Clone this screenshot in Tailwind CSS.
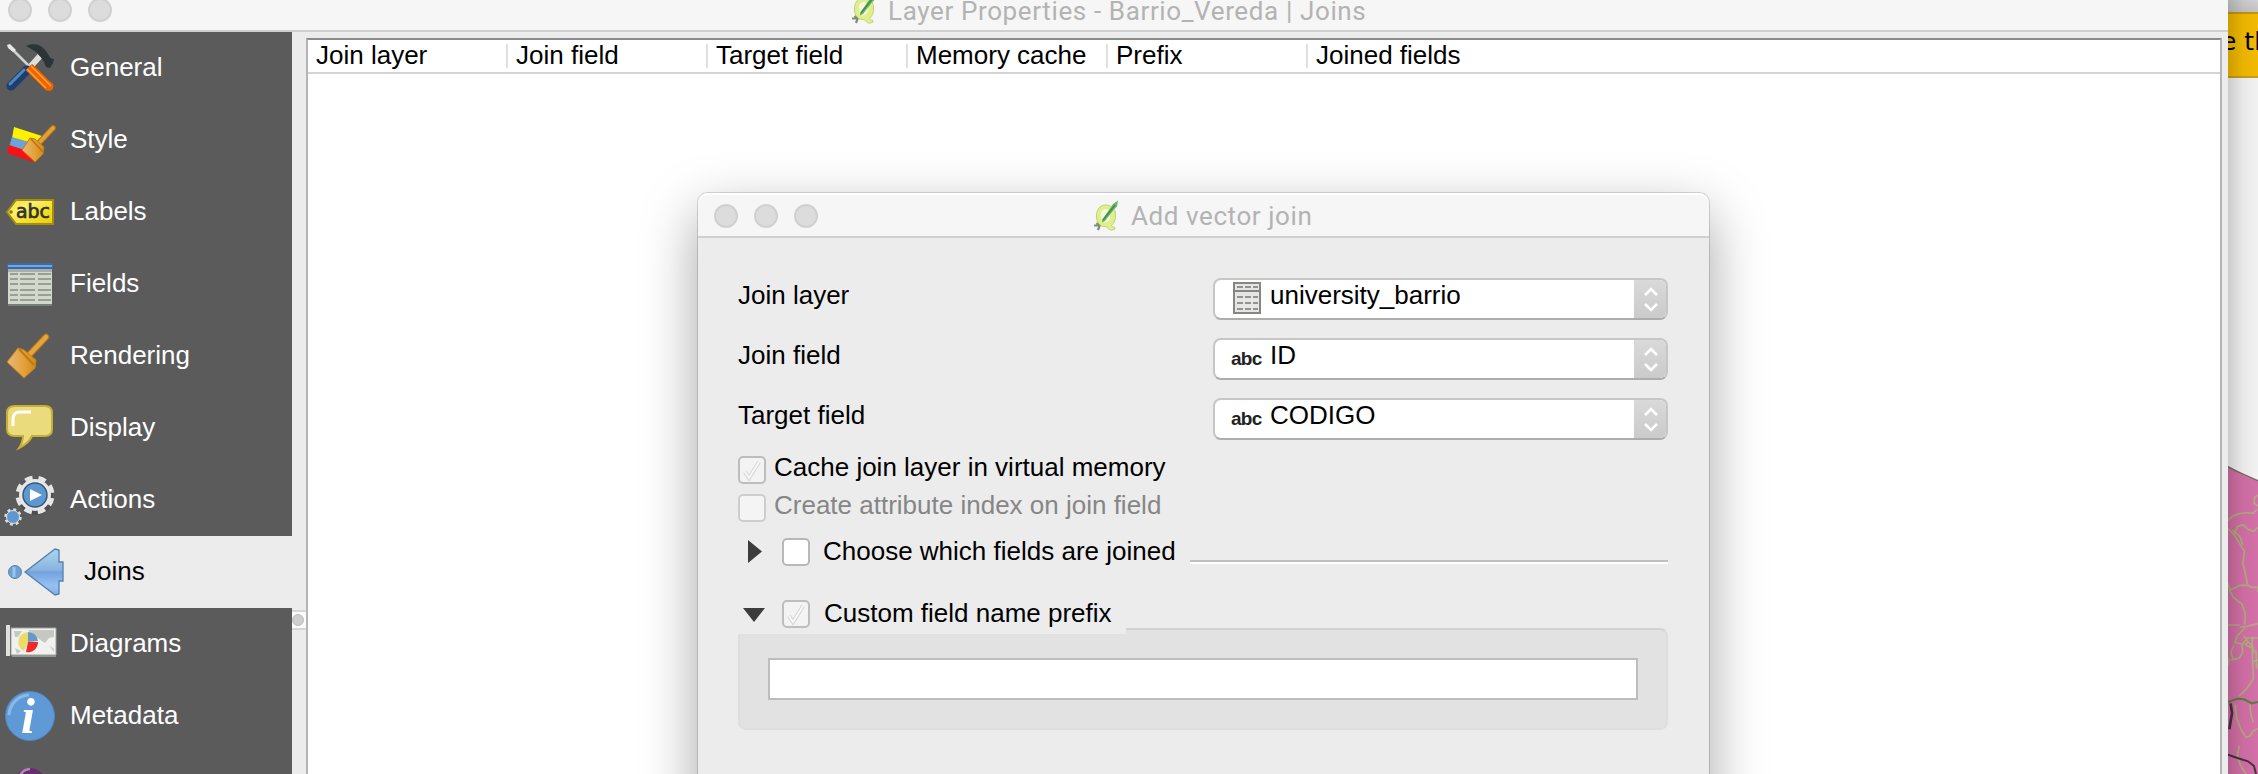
<!DOCTYPE html>
<html lang="en">
<head>
<meta charset="utf-8">
<title>Layer Properties</title>
<script src="https://cdn.jsdelivr.net/npm/@tailwindcss/browser@4"></script>
</head>
<body class="w-[2258px] h-[774px] overflow-hidden bg-white text-[26px] leading-[30px] text-black font-['Liberation_Sans',Arial,sans-serif] whitespace-nowrap">
<svg class="absolute w-0 h-0">
  <defs>
    <linearGradient id="gold" x1="0" y1="0" x2="1" y2="1"><stop offset="0" stop-color="#f6e12c"/><stop offset=".35" stop-color="#fbf16e"/><stop offset=".6" stop-color="#f6e12c"/><stop offset="1" stop-color="#eccb08"/></linearGradient>
    <linearGradient id="cone" x1="0" y1="0" x2="0" y2="1"><stop offset="0" stop-color="#aad6f0"/><stop offset=".45" stop-color="#8ab4de"/><stop offset=".5" stop-color="#74a2dc"/><stop offset=".8" stop-color="#97c1f5"/><stop offset="1" stop-color="#7fb0e0"/></linearGradient>
    <linearGradient id="brush" x1="0" y1="0" x2="1" y2="0"><stop offset="0" stop-color="#e8b878"/><stop offset=".6" stop-color="#e3a038"/><stop offset="1" stop-color="#d08a18"/></linearGradient>
    <symbol id="qgis" viewBox="0 0 26 32">
      <path d="M12.500 5C6 5 3 11 3.500 17c.4 6 3.500 9.500 7.500 9.500 2 0 3 .5 4 1.800 1.500 2 4 2.500 7 .7l-.5-2c-2 .5-2.500-.5-3-1.800 3-2 4.500-6 4-11.200C22 8 18 5 12.500 5Z" fill="#dff08a" stroke="#c3d173" stroke-width="1"/>
      <path d="M12.500 9c-4 0-5 4-4.700 8 .2 3.500 1.700 5.500 4 5.500 4 0 5.700-4 5.400-8C17 11 15.500 9 12.500 9Z" fill="#f3f6dc"/>
      <path d="M9 20 18 7l2-3 5-3.500-1 6-3 3-9 11.500-3 1.500Z" fill="#6fb568"/>
      <path d="M10 20 22 5" stroke="#3f8f4c" stroke-width="1.500"/>
      <path d="M1 25.500h5M3.500 23l3 3-1.500 4" stroke="#7d9077" stroke-width="2.200" fill="none"/>
    </symbol>
    <symbol id="tick" viewBox="0 0 28 28"><path d="m7 16 4 6L21 6" fill="none" stroke="#d4d4d4" stroke-width="4"/><path d="m7 16 4 6L21 6" fill="none" stroke="#f9f9f9" stroke-width="2"/></symbol>
    <symbol id="arrows" viewBox="0 0 34 42"><path d="m11 17 6-6 6 6M11 26l6 6 6-6" fill="none" stroke="#fff" stroke-width="2.600"/></symbol>
  </defs>
</svg>

<div class="relative flex w-[2258px] h-[774px] overflow-hidden">
  <main class="flex flex-col w-[2228px] h-full bg-[#ececec] shrink-0">
    <header class="relative h-8 bg-[#f6f6f6] border-b-2 border-[#cfcfcf] flex items-start shrink-0">
      <div class="flex gap-4 pl-2 -mt-[2px]">
        <i class="size-6 rounded-full bg-[#dcdcdc] border-2 border-[#d0d0d0]"></i>
        <i class="size-6 rounded-full bg-[#dcdcdc] border-2 border-[#d0d0d0]"></i>
        <i class="size-6 rounded-full bg-[#dcdcdc] border-2 border-[#d0d0d0]"></i>
      </div>
      <div class="flex ml-[739px] -mt-[7px]">
        <svg class="w-[26px] h-8"><use href="#qgis"/></svg>
        <h1 class="ml-[11px] mt-[3px] font-['Roboto'] text-[#b3b3b3]"><span class="tracking-[0.63px]">Layer Properties - Barrio_Vereda | Joins</span></h1>
      </div>
    </header>

    <div class="flex flex-1 min-h-0">
      <nav class="w-[292px] bg-[#5b5b5b] text-white overflow-hidden shrink-0 [&>div]:h-[72px] [&>div]:flex [&>div]:items-center [&>div]:gap-[10px] [&_svg]:w-[60px] [&_svg]:h-[72px] [&_svg]:overflow-visible [&_span]:-mt-[2px]">
        <div><svg viewBox="0 0 60 72">
          <path d="m9 14 21 21" stroke="#cfd2d2" stroke-width="2.500"/><path d="m7 13 3-1 6 6-3 2-5-4Z" fill="#e6e8e8"/>
          <path d="m31 34 9-10" stroke="#dedede" stroke-width="6"/>
          <path d="M26 14c7-3 15-2 19 4 4 4 4 9 9 9l-1 4-3 5c-4 0-5-3-6-6-3-5-7-10-11-12q-3-2-7-4Z" fill="#2b3436"/>
          <path d="M27 38 11 54" stroke="#1c3f6e" stroke-width="9" stroke-linecap="round"/><path d="M24 38 10 52" stroke="#4f86c0" stroke-width="3" stroke-linecap="round"/>
          <path d="m29 35 20 20" stroke="#f26200" stroke-width="9"/><circle cx="49" cy="54.500" r="4.500" fill="#f26200"/><path d="m31 34 20 20M27 37l19 19" stroke="#ffa42a" stroke-width="1.500"/>
        </svg><span>General</span></div>
        <div><svg viewBox="0 0 60 72">
          <path d="m14 23 28 9-5 9-25-7Z" fill="#fff100"/><path d="m12 33 24 7-4 9-23-6Z" fill="#6ea3d8"/><path d="m9 41 25 8-1 9L7 49Z" fill="#fb1015"/>
          <path d="M53 24 39 39" stroke="#b06f12" stroke-width="6" stroke-linecap="round"/><path d="M53 24 39 39" stroke="#e0a040" stroke-width="4" stroke-linecap="round"/>
          <path d="m30 34 5 1 9 8-1 7-8 8-13-12Z" fill="url(#brush)" stroke="#be7a14"/><path d="m31 35 12 13" stroke="#b87512" stroke-width="1.500"/>
        </svg><span>Style</span></div>
        <div><svg viewBox="0 0 60 72">
          <path d="M7 36 16 24H53V48H16Z" fill="url(#gold)" stroke="#a58c12" stroke-width="2"/><circle cx="11" cy="36" r="1.800" fill="#8a7510"/>
          <text x="16" y="42" font-size="20" font-family="DejaVu Sans" fill="#303030" stroke="#303030" stroke-width=".7" textLength="34" lengthAdjust="spacingAndGlyphs">abc</text>
        </svg><span>Labels</span></div>
        <div><svg viewBox="0 0 60 72">
          <path d="M8 16h44v41H8Z" fill="#d2d8ca"/><path d="M7 15h46v6H7Z" fill="#396bab"/><path d="M8 17h44v2H8Z" fill="#78a5d8"/><path d="M8 21h44v3H8Z" fill="#a8afa9"/>
          <path d="M10 26h8m2 0h15m3 0h13M10 31h8m2 0h15m3 0h13M10 36h8m2 0h15m3 0h13M10 42h8m2 0h15m3 0h13M10 47h8m2 0h15m3 0h13M10 52h8m2 0h15m3 0h13" stroke="#979f97" stroke-width="2"/><path d="M8 57h44" stroke="#777d77" stroke-width="2"/>
        </svg><span>Fields</span></div>
        <div><svg viewBox="0 0 60 72">
          <path d="M46 17 30 34" stroke="#b87818" stroke-width="6.500" stroke-linecap="round"/><path d="M46 17 30 34" stroke="#e6a53a" stroke-width="4.500" stroke-linecap="round"/>
          <path d="m18 28 6 2 12 10-1 8-11 10L7 42Z" fill="url(#brush)" stroke="#c48218" stroke-width="1"/><path d="m19 29 15 16" stroke="#bd7a12" stroke-width="2"/>
        </svg><span>Rendering</span></div>
        <div><svg viewBox="0 0 60 72">
          <path d="M15 14h30q7 0 7 7v16q0 7-7 7H32q-3 7-13 12 4-6 4-12h-8q-8 0-8-7V21q0-7 8-7Z" fill="#eadb7d" stroke="#c7ae36" stroke-width="2"/>
          <path d="M13 34v-7q0-7 7-7h11" fill="none" stroke="#fff" stroke-width="3"/>
        </svg><span>Display</span></div>
        <div><svg viewBox="0 0 60 72">
          <circle cx="36" cy="34" r="17" fill="#464646" opacity=".6"/>
          <circle cx="35" cy="31" r="17.500" fill="none" stroke="#e6e6e6" stroke-width="4" stroke-dasharray="7.700 6.040" transform="rotate(10 35 31)"/>
          <circle cx="35" cy="31" r="16" fill="#e8e8e8"/><circle cx="35" cy="31" r="12" fill="#5f97d0" stroke="#39597c" stroke-width="1.500"/><path d="m30 25 12 6-12 6Z" fill="#fff"/>
          <circle cx="13" cy="53" r="7.500" fill="none" stroke="#dedede" stroke-width="2.500" stroke-dasharray="3 2.890"/><circle cx="13" cy="53" r="6.500" fill="#5f97d0" stroke="#e0e0e0"/>
        </svg><span>Actions</span></div>
        <div class="bg-[#ececec] text-black"><svg class="mr-[14px]" viewBox="0 0 60 72">
          <circle cx="15" cy="36" r="6.500" fill="#6fa0d2" stroke="#5b88b8"/><path d="M14 31v10" stroke="#9cc4ea" stroke-width="3"/>
          <path d="M25 36 55 13l4 1v12h4v19h-4v13l-4 1Z" fill="url(#cone)" stroke="#557fae" stroke-width="1.300"/>
        </svg><span>Joins</span></div>
        <div><svg viewBox="0 0 60 72">
          <path d="M11 20h45v27H11Z" fill="#f1f2ef" stroke="#9da39d"/><path d="M12 47h44v2H12Z" fill="#8f9893"/>
          <path d="M14 23h8l-4 6h-3Zm14-1h26v7l-5 1-4 5-6-4-6-3Zm-13 18 6 3-4 3Zm34-3 5 4v3Z" fill="#c6c9c2"/>
          <path d="M8 17v31" stroke="#e3dfdc" stroke-width="4"/>
          <path d="M28 34V24a10 10 0 0 0-4 19Z" fill="#ecdc65"/><path d="M28 34V24a10 10 0 0 1 10 9Z" fill="#6699c8"/><path d="M28 34h10a10 10 0 0 1-12 10Z" fill="#ee2a2a"/>
        </svg><span>Diagrams</span></div>
        <div><svg viewBox="0 0 60 72">
          <circle cx="30" cy="36" r="24.500" fill="#5f9ad6" stroke="#4d86c2"/><path d="M9 35a21 21 0 0 1 20-20" fill="none" stroke="#8cb9e4" stroke-width="3"/>
          <text x="21" y="53" font-size="50" font-weight="bold" font-style="italic" font-family="Liberation Serif" fill="#fff">i</text>
        </svg><span>Metadata</span></div>
        <div><svg viewBox="0 0 60 72"><circle cx="30" cy="32" r="16" fill="#6a2c70"/><path d="M19 25q4-8 11-8" stroke="#b48ab8" stroke-width="2.500" fill="none"/></svg></div>
      </nav>

      <div class="w-[14px] pt-[578px] shrink-0">
        <div class="h-5 border-y-2 border-[#d6d6d6] bg-[#fcfcfc] flex items-center"><i class="size-3 rounded-full bg-[#cfcfcf] border border-[#bdbdbd]"></i></div>
      </div>

      <section class="w-[1916px] mt-[6px] bg-white border-t-2 border-t-[#8c8c8c] border-x-2 border-x-[#b5b5b5] shrink-0">
        <div class="h-[34px] pt-1 flex border-b-2 border-[#d4d4d4] [&>span]:w-[200px] [&>span]:h-6 [&>span]:pl-2 [&>span]:border-r-2 [&>span]:border-[#e0e0e0] [&>span]:leading-[22px]">
          <span>Join layer</span><span>Join field</span><span>Target field</span><span>Memory cache</span><span>Prefix</span><b class="font-normal pl-2 leading-[22px]">Joined fields</b>
        </div>
      </section>
    </div>
  </main>

  <!-- application window behind -->
  <aside class="relative w-[30px] h-full overflow-hidden bg-white flex flex-col">
    <div class="h-[14px] bg-linear-to-b from-[#dcdcdc] to-[#cccccc] border-b-2 border-[#d09c10] shrink-0"></div>
    <div class="h-[64px] bg-[#ffc400] border-b-2 border-[#d6a51c] flex shrink-0 font-['DejaVu_Sans'] text-[25px] leading-[56px]"><span class="-ml-[7px]">e th</span></div>
    <svg class="w-[30px] h-[696px] shrink-0" viewBox="90 -1116 90 2088" fill="none" stroke="#b9b683" stroke-width="5">
      <path d="M90 50q25 14 45 22l45 20v880H90Z" fill="#df76b0" stroke="none"/>
      <path d="M90 50q25 14 45 22l45 20" stroke="#66785d" stroke-width="4"/>
      <path d="M90 212q10-15 35-21 20-5 40-1l12-12M180 136l-10 6-2 18 12 8M90 236l20 20 15 25 14 22-4 38 6 25 8 38M104 240l22 20 8 24M110 250l8-20 16-6 16 14 16 6 14-12"/>
      <path d="M90 400l6 20 30-14 24 0 10 6h20v14M94 420l12 22 26 20 10 30-2 32M90 525h35m0 6 22-2 33-8M140 534l-22 24-8 20 24 4 14-18h32M108 586l-10 20 8 22 18-4 10-18-2-22M98 630l18-2M138 558l12 18 14 12 4 22M150 576l-8 8 14 8 8-4M164 560l-2 20 4 106-20 30-22 22M166 634l14-4M174 600l2 56M90 648l4-24"/>
      <path d="M90 756l28-10 20 2 24 12 18-4" stroke="#5d8548" stroke-width="6"/>
      <path d="M98 760l4 30-8 48" stroke="#4a3442" stroke-width="8"/>
      <path d="M112 764l4 40 14 36 14 22 12-4 10-16 14-6M156 764l2 26 8 28M124 888l-6 30 10 30 16 24"/>
      <path d="M90 914l28 10 32 10 18 14 6 24" stroke="#4a3442" stroke-width="6"/>
    </svg>
    <div class="absolute inset-0 bg-linear-to-r from-black/20 via-black/9 to-black/5"></div>
  </aside>

  <!-- floating dialog -->
  <div class="absolute left-[698px] top-[193px] w-[1011px] h-[620px] rounded-t-[10px] bg-[#ececec] shadow-[0_0_0_1px_rgba(0,0,0,0.14),0_20px_55px_rgba(0,0,0,0.36)] flex flex-col">
    <header class="h-[45px] shrink-0 rounded-t-[10px] bg-[#f6f6f6] border-b-2 border-[#d0d0d0] flex shadow-[inset_0_2px_0_#fff]">
      <div class="flex gap-4 pl-4 pt-[11px]">
        <i class="size-6 rounded-full bg-[#dcdcdc] border-2 border-[#d0d0d0]"></i>
        <i class="size-6 rounded-full bg-[#dcdcdc] border-2 border-[#d0d0d0]"></i>
        <i class="size-6 rounded-full bg-[#dcdcdc] border-2 border-[#d0d0d0]"></i>
      </div>
      <svg class="w-[26px] h-8 ml-[275px] mt-[7px]"><use href="#qgis"/></svg>
      <h2 class="ml-3 mt-[8px] font-['Roboto'] text-[#b3b3b3]"><span class="tracking-[0.58px]">Add vector join</span></h2>
    </header>

    <div class="pl-10 pr-[41px] pt-10 flex flex-col">
      <div class="flex flex-col gap-[18px] [&>div]:flex [&>div]:justify-between [&>div]:h-[42px] [&_label]:mt-[2px] [&_.box]:w-[455px] [&_.box]:h-[42px] [&_.box]:rounded-lg [&_.box]:bg-white [&_.box]:border-2 [&_.box]:border-[#c6c6c6] [&_.box]:border-b-[#adadad] [&_.box]:flex [&_.box]:overflow-hidden [&_.btn]:ml-auto [&_.btn]:-mt-[2px] [&_.btn]:-mr-[2px] [&_.btn]:w-[34px] [&_.btn]:h-[42px] [&_.btn]:bg-linear-to-b [&_.btn]:from-[#dadada] [&_.btn]:to-[#cacaca]">
        <div><label>Join layer</label><div class="box"><svg class="w-7 h-8 ml-[18px] mt-[2px]" viewBox="0 0 28 32"><path d="M1 1h26v30H1Z" fill="#e6e6e4" stroke="#868684" stroke-width="2"/><path d="M1 9h26" stroke="#868684" stroke-width="2"/><path d="M4 5h6m2 0h6m2 0h5M4 15h6m2 0h6m2 0h5M4 21h6m2 0h6m2 0h5M4 27h6m2 0h6m2 0h5" stroke="#92928f" stroke-width="2"/></svg><span class="ml-[9px]">university_barrio</span><svg class="btn"><use href="#arrows"/></svg></div></div>
        <div><label>Join field</label><div class="box"><b class="w-[39px] ml-[16px] mt-[4px] text-[19px] tracking-[-0.7px] text-[#222]">abc</b><span>ID</span><svg class="btn"><use href="#arrows"/></svg></div></div>
        <div><label>Target field</label><div class="box"><b class="w-[39px] ml-[16px] mt-[4px] text-[19px] tracking-[-0.7px] text-[#222]">abc</b><span>CODIGO</span><svg class="btn"><use href="#arrows"/></svg></div></div>
      </div>

      <div class="mt-4 flex gap-2 h-[38px]"><i class="size-7 rounded-[5px] border-2 border-[#bdbdbd] bg-[#f3f3f3]"><svg class="size-7 -m-[2px]"><use href="#tick"/></svg></i><span class="-mt-[4px]">Cache join layer in virtual memory</span></div>
      <div class="flex gap-2 h-[44px]"><i class="size-7 rounded-[5px] border-2 border-[#cdcdcd] bg-[#f4f4f4]"></i><span class="-mt-[4px] text-[#868686]">Create attribute index on join field</span></div>
      <div class="flex h-[62px] pl-[10px]">
        <svg class="w-[14px] h-7" viewBox="0 0 14 28"><path d="M0 2v23l14-11.500Z" fill="#3c3c3c"/></svg>
        <i class="size-7 ml-5 rounded-[5px] border-2 border-[#b8b8b8] bg-white"></i><span class="ml-[13px] -mt-[2px]">Choose which fields are joined</span>
        <hr class="ml-auto w-[478px] mt-[22px] h-1 border-t-2 border-[#bfbfbf] bg-white">
      </div>
      <div class="flex h-7 pl-[5px] relative z-1">
        <svg class="w-[22px] h-7" viewBox="0 0 22 28"><path d="M0 8h22L11 22Z" fill="#3c3c3c"/></svg>
        <i class="size-7 ml-[17px] rounded-[5px] border-2 border-[#bdbdbd] bg-[#f3f3f3]"><svg class="size-7 -m-[2px]"><use href="#tick"/></svg></i><span class="ml-[14px] -mt-[2px]">Custom field name prefix</span>
      </div>
      <div class="relative h-[102px] rounded-lg bg-[#e2e2e2] border-2 border-[#dedede] border-t-[#d2d2d2] px-7 pt-7">
        <div class="absolute -left-[2px] -top-[2px] w-[388px] h-[6px] bg-[#ececec]"></div>
        <div class="h-[42px] bg-white border-2 border-[#bdbdbd]"></div>
      </div>
    </div>
  </div>
</div>
</body>
</html>
